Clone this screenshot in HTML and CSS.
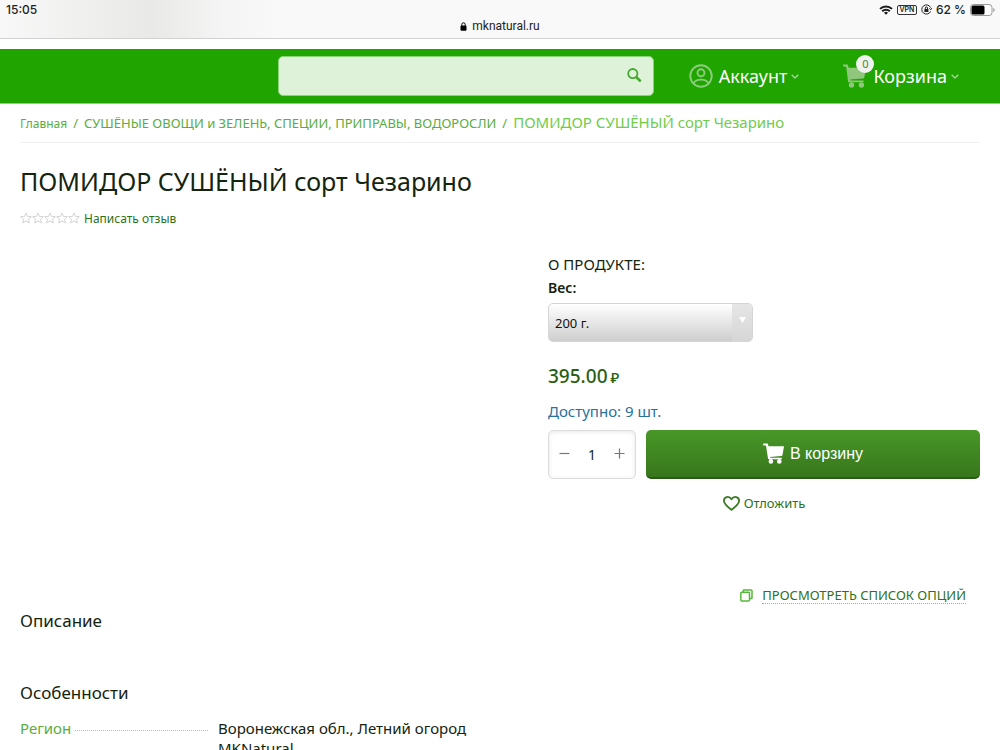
FILE: index.html
```html
<!DOCTYPE html>
<html lang="ru">
<head>
<meta charset="utf-8">
<meta name="viewport" content="width=device-width, initial-scale=1">
<title>ПОМИДОР СУШЁНЫЙ сорт Чезарино</title>
<link rel="stylesheet" href="styles.css">
</head>
<body>
<div class="browser-bar">
  <div class="status-row">
    <span class="clock">15:05</span>
    <div class="status-icons">
      <svg class="wifi" width="14" height="10" viewBox="0 0 14 10" fill="none" stroke="#1c1c1c" stroke-width="2"><path d="M1 3.9a8.6 8.6 0 0 1 12 0M3.2 6.3a5.4 5.4 0 0 1 7.6 0"/><path d="M7 9.8 5 7.8a2.8 2.8 0 0 1 4 0z" fill="#1c1c1c" stroke="none"/></svg>
      <span class="vpn">VPN</span>
      <svg width="11" height="11" viewBox="0 0 11 11" fill="none" stroke="#222"><path d="M9.6 3.6A4.6 4.6 0 1 0 9.6 7.4M8.2 4.4l1.6 1.3 1-1.6"/><path d="M3.4 5h4v3h-4z" fill="#222" stroke="none"/><path d="M4.3 5V4a1.1 1.1 0 0 1 2.2 0v1"/></svg>
      <span class="percent">62 %</span>
      <svg width="25" height="12" viewBox="0 0 25 12"><rect x=".5" y=".5" width="21.5" height="11" rx="3" fill="#fff" stroke="#999"/><rect x="1.5" y="1.5" width="13" height="9" rx="1.5" fill="#000"/><path d="M23.3 4v4c1.8-.6 1.8-3.4 0-4z" fill="#999"/></svg>
    </div>
  </div>
  <div class="address">
    <svg width="7" height="9" viewBox="0 0 7 9"><rect x=".5" y="3.6" width="6" height="5.2" rx="1" fill="#000"/><path d="M1.8 4V2.5a1.7 1.7 0 0 1 3.4 0V4" fill="none" stroke="#000"/></svg>
    <span>mknatural.ru</span>
  </div>
</div>

<header class="top-panel">
  <form class="search" role="search">
    <input class="search-input" type="search" aria-label="Поиск">
    <button class="search-button" type="button" aria-label="Найти"><svg width="15" height="15" viewBox="0 0 15 15" fill="none" stroke="#45a92e" stroke-linecap="round"><circle cx="5.8" cy="5.6" r="4.6" stroke-width="1.8"/><path d="M9.5 9.3 13 12.7" stroke-width="2.6"/></svg></button>
  </form>
  <nav class="user-menu">
    <a class="menu-link" href="#">
      <svg width="24" height="24" viewBox="0 0 24 24" fill="none" stroke="#8ccc7d" stroke-width="1.9"><circle cx="12" cy="12" r="10.7"/><circle cx="12" cy="8.8" r="3.5"/><path d="M4.4 19.4c1.5-2.6 4-3.8 7.6-3.8s6.1 1.2 7.6 3.8"/></svg>
      <span>Аккаунт</span>
      <svg class="chevron" width="8" height="5" viewBox="0 0 8 5" fill="none" stroke="#a4d896" stroke-width="1.3"><path d="m.7.7 3.3 3.3L7.3.7"/></svg>
    </a>
    <a class="menu-link" href="#">
      <span class="cart">
        <svg width="24" height="24" viewBox="0 0 24 24" fill="#8fc77c"><path d="M0 .5h4.8l.8 3.2H23l-1.700 9.500c-.1.800-.7 1.200-1.500 1.300L7.200 15.600l.2 1h13.200v1.700H6c-.5 0-.9-.4-1-.9L3.300 3 0 2.300z"/><circle cx="8.500" cy="21" r="2.700"/><circle cx="18.400" cy="21" r="2.700"/></svg>
        <span class="badge">0</span>
      </span>
      <span>Корзина</span>
      <svg class="chevron" width="8" height="5" viewBox="0 0 8 5" fill="none" stroke="#a4d896" stroke-width="1.3"><path d="m.7.7 3.3 3.3L7.3.7"/></svg>
    </a>
  </nav>
</header>

<main class="content">
  <nav class="breadcrumbs">
    <a class="home" href="#">Главная</a><span class="slash">/</span><a class="category" href="#">СУШЁНЫЕ ОВОЩИ и ЗЕЛЕНЬ, СПЕЦИИ, ПРИПРАВЫ, ВОДОРОСЛИ</a><span class="slash">/</span><span class="current">ПОМИДОР СУШЁНЫЙ сорт Чезарино</span>
  </nav>
  <h1 class="title">ПОМИДОР СУШЁНЫЙ сорт Чезарино</h1>
  <div class="rating">
    <svg width="60" height="12" viewBox="0 0 60 12" fill="none" stroke="#d4d4d4"><defs><path id="star" d="m6 .9 1.500 3.400 3.800.4-2.800 2.500.8 3.700L6 9l-3.300 1.900.8-3.700L.7 4.700l3.800-.4z"/></defs><use href="#star"/><use href="#star" x="12"/><use href="#star" x="24"/><use href="#star" x="36"/><use href="#star" x="48"/></svg>
    <a href="#">Написать отзыв</a>
  </div>

  <div class="product">
    <div class="gallery"></div>
    <section class="details">
      <p class="about">О ПРОДУКТЕ:</p>
      <label class="weight-label" for="weight">Вес:</label>
      <div class="select-box">
        <select id="weight"><option>200 г.</option></select>
        <span class="select-arrow"><svg width="7" height="7" viewBox="0 0 7 7"><path d="M0 0h7L3.500 6z" fill="#fff"/></svg></span>
      </div>
      <p class="price">395.00 <span class="currency">₽</span></p>
      <p class="stock">Доступно: 9 шт.</p>
      <div class="buy">
        <div class="quantity">
          <button type="button" aria-label="Меньше"><svg width="11" height="11" viewBox="0 0 11 11" stroke="#777" stroke-width="1.200"><path d="M.5 5.500h10"/></svg></button>
          <input type="text" value="1" aria-label="Количество">
          <button type="button" aria-label="Больше"><svg width="11" height="11" viewBox="0 0 11 11" stroke="#777" stroke-width="1.200"><path d="M.5 5.500h10M5.500.5v10"/></svg></button>
        </div>
        <button class="add" type="button">
          <svg width="22" height="21" viewBox="0 0 22 21" fill="#fff"><path d="M.8.6h3.100c.7 0 1 .4 1.200 1l.4 1.700H21l-1.500 8.800c-.1.600-.5 1-1.200 1L7 13.900l.2.900h11.500v1.400H6c-.6 0-.9-.3-1-.8L3 2.400H.8C-.2 2.400-.2.600.8.600z"/><circle cx="7.900" cy="18.400" r="2.300"/><circle cx="16.300" cy="18.400" r="2.300"/></svg>
          <span>В корзину</span>
        </button>
      </div>
      <a class="wishlist" href="#">
        <svg width="17" height="15" viewBox="0 0 17 15" fill="none" stroke="#387b22" stroke-width="1.800" stroke-linejoin="round"><path d="M8.500 13.900C4.500 10.600.9 8 .9 4.700.9.500 6.200-.4 8.500 3.300 10.800-.4 16.100.5 16.100 4.700c0 3.300-3.600 5.900-7.600 9.200z"/></svg>
        <span>Отложить</span>
      </a>
      <a class="options" href="#">
        <svg width="13" height="13" viewBox="0 0 13 13" fill="none" stroke="#55b839" stroke-width="1.500"><rect x=".8" y="3.300" width="8.700" height="8.700" rx="1"/><path d="M3.300 3V1.700c0-.5.300-.8.800-.8h7c.6 0 .9.300.9.900v6.900c0 .5-.3.800-.8.800H9.800"/></svg>
        <span>ПРОСМОТРЕТЬ СПИСОК ОПЦИЙ</span>
      </a>
    </section>
  </div>

  <h2 class="section-title">Описание</h2>
  <h2 class="section-title features-title">Особенности</h2>
  <dl class="features">
    <dt>Регион</dt>
    <dd>Воронежская обл., Летний огород<br>MKNatural</dd>
  </dl>
</main>
</body>
</html>
```

FILE: styles.css
```css
* { box-sizing: border-box; }
body { margin: 0; background: #fff; color: #14240f; font: 15px/20px "Noto Sans", sans-serif; }
a { color: #2e7218; text-decoration: none; }
button, input, select { font: inherit; color: inherit; }
button { border: 0; padding: 0; background: none; cursor: pointer; }
p, h1, h2, dl, dd { margin: 0; }
svg { display: block; flex: none; }

.browser-bar { height: 39px; border-bottom: 1px solid #d2d2d2; background: linear-gradient(90deg, #f8f8f8, #e9e9e7 15%, #f4f4f4 22%, #f9f9f9 28%); color: #222; font-family: Inter, sans-serif; }
.status-row { display: flex; justify-content: space-between; align-items: center; height: 19px; padding: 0 5px 0 6px; font-size: 12px; font-weight: 500; }
.status-icons { display: flex; align-items: center; gap: 4px; }
.vpn { width: 20px; height: 10px; border: 1px solid #333; border-radius: 2px; font-size: 7px; font-weight: 600; line-height: 8px; text-align: center; }
.percent { white-space: nowrap; }
.address { display: flex; justify-content: center; align-items: center; gap: 5px; height: 14px; font: 12px/14px Roboto, sans-serif; }

.top-panel { display: flex; align-items: center; justify-content: flex-end; height: 55px; margin-top: 10px; padding-right: 41px; border-bottom: 1px solid #8fd07f; background: #1fa400; }
.search { display: flex; align-items: center; width: 376px; height: 40px; margin-right: auto; margin-left: 278px; border: 1px solid #8bd27b; border-radius: 5px; background: #def2da; }
.search-input { flex: 1; min-width: 0; height: 100%; border: 0; outline: 0; padding: 0 10px; background: transparent; }
.search-button { padding: 0 11px 2px; }
.user-menu { display: flex; gap: 44px; }
.menu-link { display: flex; align-items: center; color: #fff; font-size: 18px; }
.menu-link > span:not(.cart) { margin: 0 4px 0 6px; }
.cart { position: relative; }
.badge { position: absolute; top: -9px; left: 13px; width: 18px; height: 18px; border-radius: 9px; background: #f0f2ef; color: #438a30; font-size: 11px; line-height: 18px; text-align: center; }

.content { padding: 0 20px; }
.breadcrumbs { display: flex; align-items: baseline; height: 39px; padding-top: 8px; border-bottom: 1px solid #f0f0f0; font-size: 13px; white-space: nowrap; }
.breadcrumbs a { color: #5aad3e; }
.breadcrumbs .home { font-size: 12px; }
.slash { padding: 0 6px; color: #5aad3e; }
.current { color: #6fcc4c; font-size: 15px; }
.title { margin-top: 19px; font-size: 25px; font-weight: 400; line-height: 38px; }
.rating { display: flex; align-items: center; gap: 4px; margin-top: 9px; font-size: 12px; }
.rating svg { margin-bottom: 3px; }

.product { display: grid; grid-template-columns: 11fr 9fr; }
.details { display: flex; flex-direction: column; margin-top: 25px; }
.about { line-height: 20px; }
.weight-label { margin: 4px 0 3px; font-size: 14px; font-weight: 600; }
.select-box { position: relative; width: 205px; margin-top: 2px; }
.select-box select { display: block; width: 100%; height: 39px; padding: 0 30px 0 6px; border: 1px solid #d5d5d5; border-radius: 5px; appearance: none; background: linear-gradient(#fff, #cecece); color: #111; font-size: 13px; }
.select-arrow { position: absolute; top: 1px; right: 1px; bottom: 1px; display: grid; place-items: center; width: 20px; padding-bottom: 4px; border-radius: 0 4px 4px 0; background: linear-gradient(#e6e6e6, #d6d6d6); pointer-events: none; }
.price { margin-top: 21px; color: #285f17; font-size: 19px; font-weight: 500; line-height: 26px; }
.currency { margin-left: -2px; font-size: 15px; }
.stock { margin-top: 11px; color: #28719b; }
.buy { display: flex; gap: 10px; margin-top: 9px; }
.quantity { display: flex; align-items: center; width: 88px; height: 49px; padding: 0 10px; border: 1px solid #ddd; border-radius: 5px; box-shadow: inset 0 1px 4px #e6e6e6; }
.quantity button { padding-bottom: 2px; }
.quantity input { flex: 1; min-width: 0; border: 0; outline: 0; padding: 0; background: transparent; font-size: 14px; text-align: center; }
.add { display: flex; flex: 1; align-items: center; justify-content: center; gap: 5px; border-bottom: 2px solid #285c17; border-radius: 5px; background: linear-gradient(#489828, #37761b); color: #fff; font: 16px/20px "Liberation Sans", sans-serif; }
.wishlist { display: flex; align-items: center; align-self: center; gap: 4px; margin-top: 14px; font-size: 13px; }
.options { display: flex; align-items: center; align-self: flex-end; gap: 9px; margin: 74px 14px 0 0; font-size: 13px; line-height: 16px; }
.options span { border-bottom: 1px dotted #8dbf7d; }
.section-title { margin-top: 4px; font-size: 17px; font-weight: 400; line-height: 26px; }
.features-title { margin-top: 46px; }
.features { display: grid; grid-template-columns: 188px 1fr; column-gap: 10px; margin-top: 12px; }
.features dt { display: flex; gap: 4px; color: #5aad3e; }
.features dt::after { content: ""; flex: 1; height: 12px; border-bottom: 1px dotted #bbb; }
```
